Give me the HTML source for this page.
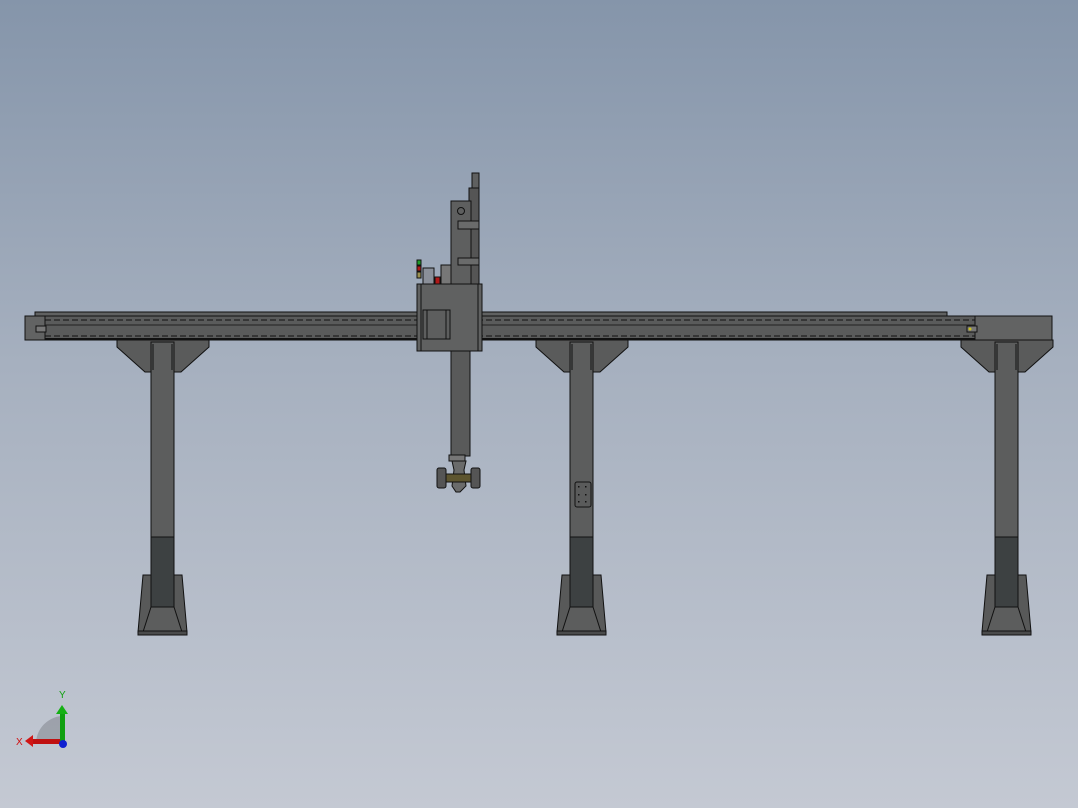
<!DOCTYPE html>
<html><head><style>
html,body{margin:0;padding:0;width:1078px;height:808px;overflow:hidden}
body{background:linear-gradient(#8595aa 0%,#a6b0bf 45%,#c4c9d3 100%);font-family:"Liberation Sans",sans-serif}
svg{position:absolute;left:0;top:0}
</style></head><body>
<svg width="1078" height="808" viewBox="0 0 1078 808">
<defs>
<g id="leg" stroke="#111" stroke-width="1">
  <polygon points="-46,340 46,340 46,347 18,372 -18,372 -46,347" fill="#5a5b5b"/>
  <rect x="-12" y="342" width="23" height="195" fill="#5c5d5d"/>
  <rect x="-12" y="537" width="23" height="70" fill="#3d4142"/>
  <polygon points="-20,575 -12,575 -12,607 11,607 11,575 19,575 24,632 -25,632" fill="#585959"/>
  <polygon points="-12,607 11,607 19,632 -20,632" fill="#5c5d5d"/>
  <rect x="-25" y="631" width="49" height="4" fill="#4a4b4b"/>
  <line x1="-10" y1="344" x2="-10" y2="370"/><line x1="9" y1="344" x2="9" y2="370"/>
</g>
</defs>
<!-- beam -->
<rect x="35" y="312" width="912" height="5" fill="#606161" stroke="#111"/>
<rect x="25" y="316" width="1027" height="24" fill="#5a5b5b" stroke="#111"/>
<rect x="25" y="316" width="20" height="24" fill="#626363" stroke="#111"/>
<rect x="975" y="316" width="77" height="24" fill="#626363" stroke="#111"/>
<line x1="45" y1="320" x2="975" y2="320" stroke="#111" stroke-dasharray="6,3"/>
<line x1="45" y1="325" x2="975" y2="325" stroke="#222"/>
<line x1="45" y1="336" x2="975" y2="336" stroke="#111" stroke-dasharray="6,3"/>
<rect x="45" y="338" width="930" height="2" fill="#111"/>
<rect x="36" y="326" width="10" height="6" fill="#777" stroke="#111"/>
<rect x="967" y="326" width="10" height="6" fill="#777" stroke="#111"/>
<circle cx="970" cy="329" r="1.5" fill="#c8c020"/>
<use href="#leg" transform="translate(163,0)"/>
<use href="#leg" transform="translate(582,0)"/>
<use href="#leg" transform="translate(1007,0)"/>
<rect x="575" y="482" width="16" height="25" rx="2" fill="#5a5b5b" stroke="#111"/>
<g fill="#111"><rect x="578" y="486" width="1.5" height="1.5"/><rect x="585" y="486" width="1.5" height="1.5"/><rect x="578" y="494" width="1.5" height="1.5"/><rect x="585" y="494" width="1.5" height="1.5"/><rect x="578" y="501" width="1.5" height="1.5"/><rect x="585" y="501" width="1.5" height="1.5"/></g>
<!-- vertical axis -->
<g stroke="#111">
<rect x="472" y="173" width="7" height="112" fill="#5f6060"/>
<rect x="469" y="188" width="10" height="96" fill="#555"/>
<rect x="451" y="201" width="20" height="84" fill="#5e5f5f"/>
<circle cx="461" cy="211" r="3.5" fill="none"/>
<rect x="458" y="221" width="21" height="8" fill="#6a6b6b"/>
<rect x="458" y="258" width="21" height="7" fill="#6a6b6b"/>
<rect x="441" y="265" width="10" height="20" fill="#777"/>
<rect x="423" y="268" width="11" height="16" fill="#8a8f99"/>
<rect x="435" y="277" width="5" height="7" fill="#b01818"/>
<rect x="417" y="260" width="4" height="5" fill="#1f9a2a"/>
<rect x="417" y="266" width="4" height="5" fill="#b01818"/>
<rect x="417" y="272" width="4" height="6" fill="#9a9050"/>
<rect x="451" y="351" width="19" height="105" fill="#595a5a"/>
<rect x="417" y="284" width="65" height="67" fill="#606161"/>
<line x1="421" y1="284" x2="421" y2="351"/><line x1="478" y1="284" x2="478" y2="351"/>
<rect x="423" y="310" width="27" height="29" fill="#5d5e5e"/>
<line x1="427" y1="310" x2="427" y2="339"/><line x1="446" y1="310" x2="446" y2="339"/>
<rect x="449" y="455" width="16" height="6" fill="#777"/>
<polygon points="452,461 466,461 464,470 466,486 460,492 456,492 452,486 454,470" fill="#6a6b6b"/>
<rect x="437" y="468" width="9" height="20" rx="2" fill="#555"/>
<rect x="471" y="468" width="9" height="20" rx="2" fill="#555"/>
<rect x="446" y="474" width="25" height="8" fill="#5d5530"/>
</g>
<!-- triad -->
<path d="M36,742 A28,28 0 0 1 62,716 L62,742 Z" fill="#8e939b" opacity="0.7"/>
<rect x="30" y="739" width="32" height="5" fill="#c01010"/>
<polygon points="25,741 33,735 33,747" fill="#d01515"/>
<rect x="60" y="712" width="5" height="30" fill="#10a010"/>
<polygon points="62,705 56,714 68,714" fill="#15b015"/>
<circle cx="63" cy="744" r="4" fill="#1020d0"/>
<text x="16" y="745" font-size="10" fill="#d01010">X</text>
<text x="59" y="698" font-size="10" fill="#10a010">Y</text>
</svg>
</body></html>
